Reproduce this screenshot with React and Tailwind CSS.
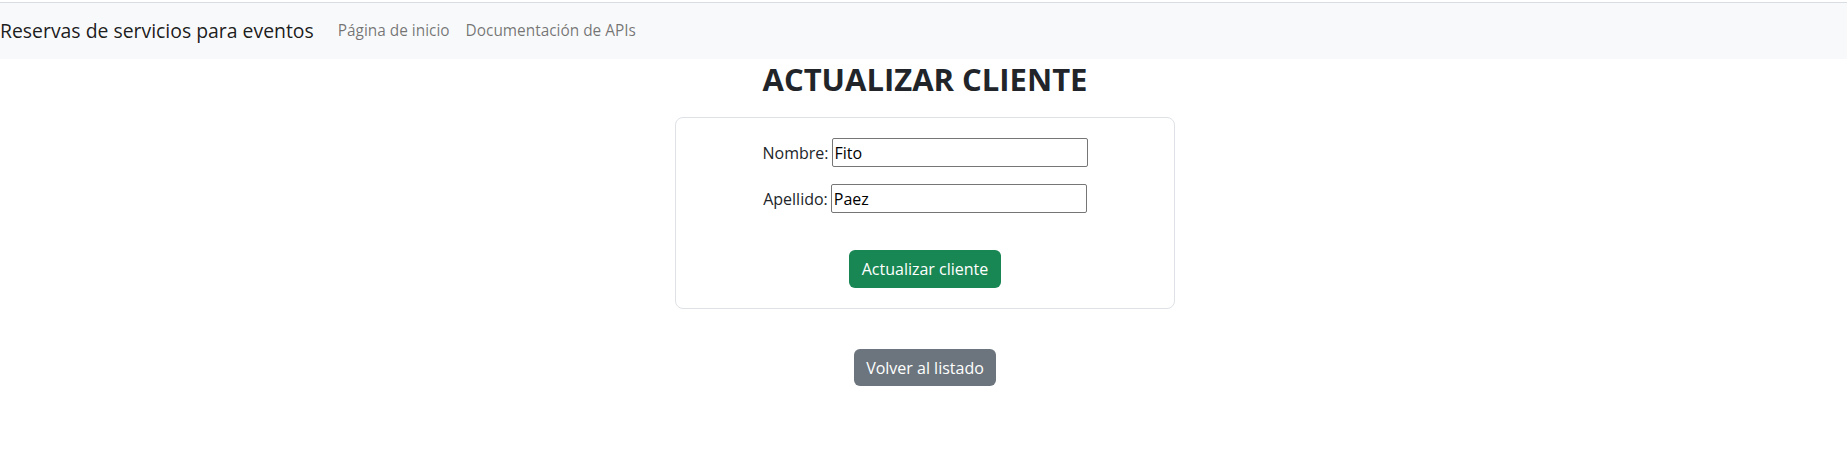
const NavBar = () => {
  return (
    <div className="mt-[2px] border-t border-[#d9dce0] bg-[#f8f9fa]">
      <div className="flex h-[56px] items-center">
        <span className="text-[19.4px] text-black/90 mr-[24px]">Reservas de servicios para eventos</span>
        <nav className="flex gap-[16px] text-[15.4px] text-black/55">
          <a href="#">Página de inicio</a>
          <a href="#">Documentación de APIs</a>
        </nav>
      </div>
    </div>
  );
};

const Field = ({ label, value }) => (
  <div className="flex items-center justify-center">
    <label className="mr-[3px] text-[16px]">{label}</label>
    <input
      type="text"
      defaultValue={value}
      className="h-[29px] w-[256px] rounded-[2px] border border-[#767676] px-[2px] text-[16px] text-black"
    />
  </div>
);

export default function App() {
  return (
    <div className="min-h-[471px] bg-white text-[#212529] font-['Open_Sans',sans-serif]">
      <NavBar />
      <main className="flex flex-col items-center pl-[3px]">
        <h2 className="mt-[1px] text-[31px] leading-[38px] font-bold">ACTUALIZAR CLIENTE</h2>
        <div className="mt-[19px] w-[500px] rounded-[8px] border border-[#dee2e6] px-4 pt-[20px] pb-[20px]">
          <div className="flex flex-col gap-[17px]">
            <Field label="Nombre:" value="Fito" />
            <Field label="Apellido:" value="Paez" />
          </div>
          <div className="mt-[37px] flex justify-center">
            <button className="h-[38px] w-[152px] rounded-[6px] bg-[#198754] text-[16px] text-white">
              Actualizar cliente
            </button>
          </div>
        </div>
        <button className="mt-[40px] h-[37px] w-[142px] rounded-[6px] bg-[#6c757d] text-[16px] text-white">
          Volver al listado
        </button>
      </main>
    </div>
  );
}
